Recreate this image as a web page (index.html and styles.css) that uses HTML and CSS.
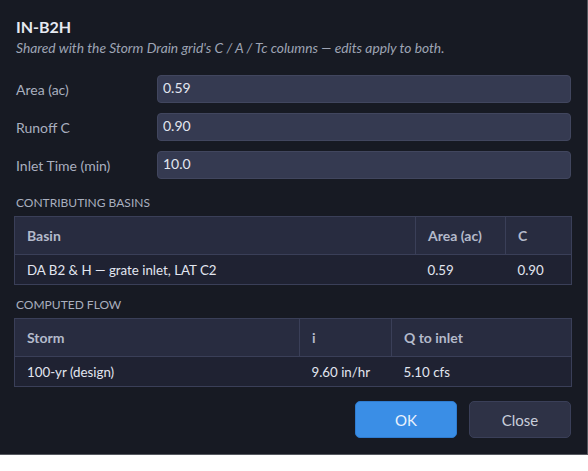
FILE: index.html
```html
<!DOCTYPE html>
<html lang="en">
<head>
    <meta charset="UTF-8">
    <title>IN-B2H | Inlet Properties</title>
    <link rel="stylesheet" href="styles.css">
</head>
<body>
    <div class="dialog">
        <h1>IN-B2H</h1>
        <p class="note">Shared with the Storm Drain grid's C / A / Tc columns — edits apply to both.</p>

        <form class="fields">
            <label for="area">Area (ac)</label>
            <input id="area" type="text" value="0.59">
            <label for="runoff">Runoff C</label>
            <input id="runoff" type="text" value="0.90">
            <label for="tc">Inlet Time (min)</label>
            <input id="tc" type="text" value="10.0">
        </form>

        <h2>Contributing Basins</h2>
        <table class="grid">
            <thead>
                <tr>
                    <th class="col-basin">Basin</th>
                    <th class="col-area">Area (ac)</th>
                    <th>C</th>
                </tr>
            </thead>
            <tbody>
                <tr>
                    <td>DA B2 &amp; H — grate inlet, LAT C2</td>
                    <td>0.59</td>
                    <td>0.90</td>
                </tr>
            </tbody>
        </table>

        <h2>Computed Flow</h2>
        <table class="grid">
            <thead>
                <tr>
                    <th class="col-storm">Storm</th>
                    <th class="col-i">i</th>
                    <th>Q to inlet</th>
                </tr>
            </thead>
            <tbody>
                <tr>
                    <td>100-yr (design)</td>
                    <td>9.60 in/hr</td>
                    <td>5.10 cfs</td>
                </tr>
            </tbody>
        </table>

        <div class="actions">
            <button class="btn primary">OK</button>
            <button class="btn">Close</button>
        </div>
    </div>
</body>
</html>
```

FILE: styles.css
```css
:root {
    --bg: #171a23;
    --field: #353a51;
    --field-border: #41465e;
    --head: #282c40;
    --row: #1f2232;
    --line: #3a3f58;
    --text: #e2e6f0;
    --muted: #a9afbf;
    --primary: #3a8ee6;
}
* { box-sizing: border-box; }
body {
    margin: 0;
    background: #fff;
    font-family: Lato, 'Noto Sans', Arial, sans-serif;
    color: var(--text);
}
.dialog {
    width: 588px;
    height: 455px;
    background: var(--bg);
    border-right: 1px solid #55585f;
    border-bottom: 1px solid #55585f;
    padding: 16px 16px 0 14px;
}
h1 {
    margin: 0 0 0 2px;
    font-size: 16px;
    line-height: 22px;
    font-weight: 700;
    color: #e6e9f1;
}
.note {
    margin: 1px 0 0 2px;
    font-size: 13.8px;
    line-height: 18px;
    font-style: italic;
    color: #9ea4b4;
}
.fields {
    display: grid;
    grid-template-columns: 133px 1fr;
    column-gap: 10px;
    row-gap: 10px;
    align-items: center;
    margin: 18px 0 16px;
}
.fields label {
    font-size: 14px;
    color: var(--muted);
    padding-left: 2px;
}
.fields input {
    height: 28px;
    background: var(--field);
    border: 1px solid var(--field-border);
    border-radius: 4px;
    padding: 0 0 3px 5px;
    font: inherit;
    font-size: 14px;
    color: var(--text);
}
h2 {
    margin: 12px 0 5px 2px;
    font-size: 12px;
    line-height: 16px;
    font-weight: 400;
    text-transform: uppercase;
    color: var(--muted);
}
.grid {
    width: 558px;
    border-collapse: collapse;
    table-layout: fixed;
    border: 1px solid var(--line);
    font-size: 13.3px;
}
.grid th {
    height: 38px;
    background: var(--head);
    text-align: left;
    font-weight: 700;
    font-size: 14px;
    color: #b4bacb;
    padding: 0 12px;
    border-right: 1px solid var(--line);
    border-bottom: 1px solid var(--line);
}
.grid td {
    height: 30px;
    background: var(--row);
    padding: 0 12px;
}
.col-basin { width: 401px; }
.col-area { width: 90px; }
.col-storm { width: 285px; }
.col-i { width: 92px; }
.actions {
    display: flex;
    justify-content: flex-end;
    gap: 12px;
    margin-top: 14px;
}
.btn {
    width: 102px;
    height: 37px;
    border-radius: 5px;
    border: 1px solid var(--line);
    background: #2e3246;
    color: #c9cedb;
    font: inherit;
    font-size: 15px;
    cursor: pointer;
}
.btn.primary {
    background: var(--primary);
    border-color: #2f7cd0;
    color: #eaf2fd;
}
```
